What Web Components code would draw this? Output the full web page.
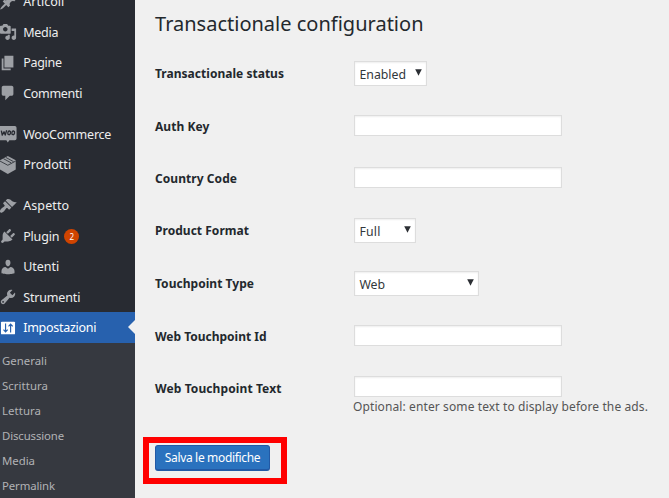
<!DOCTYPE html>
<html lang="it">
<head>
<meta charset="utf-8">
<title>Transactionale configuration</title>
<style>
body{margin:0;background:#f0f0f0;width:669px;height:498px;overflow:hidden;font-family:"Noto Sans","Open Sans",sans-serif}
</style>
</head>
<body>
<admin-page></admin-page>
<script>
const ICONS = {
  post:'<path d="M10.44 3.02l1.82-1.82 6.36 6.35-1.83 1.82c-1.05-.68-2.48-.57-3.41.36l-.75.75c-.92.93-1.04 2.35-.35 3.41l-1.83 1.82-2.41-2.41-2.8 2.79c-.42.42-3.38 2.71-3.8 2.29s1.86-3.39 2.28-3.81l2.79-2.79L4.1 9.36l1.83-1.82c1.05.69 2.48.57 3.4-.36l.75-.75c.93-.92 1.05-2.35.36-3.41z"/>',
  media:'<path fill-rule="evenodd" d="M13 11V4c0-.55-.45-1-1-1h-1.67L9 1H5L3.67 3H2c-.55 0-1 .45-1 1v7c0 .55.45 1 1 1h10c.55 0 1-.45 1-1zM7 4.5c1.38 0 2.5 1.12 2.5 2.5S8.38 9.5 7 9.5 4.5 8.38 4.5 7 5.62 4.5 7 4.5z"/><path d="M14 6h5v10.5c0 1.38-1.12 2.5-2.5 2.5S14 17.88 14 16.5s1.12-2.5 2.5-2.5c.17 0 .34.02.5.05V9h-3V6zm-4 8.05V13h2v3.5c0 1.38-1.12 2.5-2.5 2.5S7 17.88 7 16.5 8.12 14 9.5 14c.17 0 .34.02.5.05z"/>',
  page:'<path d="M6 15V2h10v13H6zm-1 1h8v2H3V5h2v11z"/>',
  comments:'<path d="M5 2h9c1.1 0 2 .9 2 2v7c0 1.1-.9 2-2 2h-2l-5 5v-5H5c-1.1 0-2-.9-2-2V4c0-1.1.9-2 2-2z"/>',
  woo:'<path d="M1 1h16.6q1.9 0 1.9 2v12q0 2-1.9 2H11.5l-1.7 2.4L8.2 17H1z"/><g fill="none" stroke="#282b32" stroke-width="1.5" stroke-linejoin="round"><path d="M2.6 6.2l1 5L5.6 7.5l1.3 3.7L8.5 5.8"/><ellipse cx="11.3" cy="8.7" rx="1.5" ry="2.1" transform="rotate(12 11.3 8.7)"/><ellipse cx="15.8" cy="8.7" rx="1.5" ry="2.1" transform="rotate(12 15.8 8.7)"/></g>',
  box:'<path d="M9.8 0L18.6 4.8V15L9.8 20 1 15V4.8z"/><path d="M1 5.6l8.8 4.7 8.8-4.7M5 3l8.6 4.7M7.6 1.6l8.6 4.7" fill="none" stroke="#282b32" stroke-width=".9"/>',
  appearance:'<path d="M14.48 11.06L7.41 3.99l1.5-1.5c.5-.56 2.3-.47 3.51.32 1.21.8 1.43 1.28 2.91 2.1 1.18.64 2.45 1.26 4.45.85zm-.71.71L6.7 4.7 4.93 6.47c-.39.39-.39 1.02 0 1.41l1.06 1.06c.39.39.39 1.03 0 1.42-.6.6-1.43 1.11-2.21 1.69-.35.26-.7.53-1.01.84C1.43 14.23.4 16.08 1.4 17.07c.99 1 2.84-.03 4.18-1.36.31-.31.58-.66.85-1.02.57-.78 1.08-1.61 1.69-2.21.39-.39 1.02-.39 1.41 0l1.06 1.06c.39.39 1.02.39 1.41 0z"/>',
  plugins:'<path d="M13.11 4.36L9.87 7.6 8 5.73l3.24-3.24c.35-.34 1.05-.2 1.56.32.52.51.66 1.21.31 1.55zm-8 1.77l.91-1.12 9.01 9.01-1.19.84c-.71.71-2.63 1.16-3.82 1.16H6.14L4.9 17.26c-.59.59-1.54.59-2.12 0-.59-.58-.59-1.53 0-2.12l1.24-1.24v-3.88c0-1.13.4-3.19 1.09-3.89zm7.26 3.97l3.24-3.24c.34-.35 1.04-.21 1.55.31.52.51.66 1.21.31 1.55l-3.24 3.25z"/>',
  users:'<path d="M10 9.25c-2.27 0-2.73-3.44-2.73-3.44C7 4.02 7.82 2 9.97 2c2.16 0 2.98 2.02 2.71 3.81 0 0-.41 3.44-2.68 3.44zm0 2.57L12.72 10c2.39 0 4.52 2.33 4.52 4.53v2.49s-3.65 1.13-7.24 1.13c-3.65 0-7.24-1.13-7.24-1.13v-2.49c0-2.25 1.94-4.48 4.47-4.48z"/>',
  tools:'<path fill-rule="evenodd" d="M16.68 9.77c-1.34 1.34-3.3 1.67-4.95.99l-5.41 6.52c-.99.99-2.59.99-3.58 0s-.99-2.59 0-3.57l6.52-5.42c-.68-1.65-.35-3.61.99-4.95 1.28-1.28 3.12-1.62 4.72-1.06l-2.89 2.89 2.82 2.82 2.86-2.87c.53 1.58.18 3.39-1.08 4.65zM3.81 16.21c.4.39 1.04.39 1.43 0 .4-.4.4-1.04 0-1.43-.39-.4-1.03-.4-1.43 0-.39.39-.39 1.03 0 1.43z"/>',
  settings:'<rect x="2.2" y="3" width="15.6" height="14" rx="1"/><path d="M7.3 5v9.2M5 11.8l2.3 2.6 2.3-2.6M12.9 15V5.8M10.6 8.2l2.3-2.6 2.3 2.6" fill="none" stroke="#2761ae" stroke-width="1.3"/>'
};
const define = (name, render, after) => customElements.define(name, class extends HTMLElement {
  connectedCallback() {
    if (this.shadowRoot) return;
    this.attachShadow({mode:'open'}).innerHTML = render(this);
    if (after) after(this);
  }
});

/* Text run tracked to fill a given width */
define('fit-text', () => `<style>:host{display:inline-block;white-space:nowrap}span{display:inline-block}</style><span></span>`, el => {
  const s = el.shadowRoot.querySelector('span');
  s.textContent = el.getAttribute('text');
  const w = +el.getAttribute('w');
  s.style.letterSpacing = (w - s.getBoundingClientRect().width) / s.textContent.length + 'px';
});

define('menu-item', el => `<style>
:host{display:flex;align-items:center;height:30.47px;flex:none;color:#eee;font-size:12.5px;position:relative}
:host([gap]){margin-top:10.5px}
svg{width:18px;height:18px;margin:0 7px 0 -1.5px;fill:#9da0a5;flex:none}
fit-text{margin-left:-.3px}
:host([active]){background:#2761ae;color:#fff}
:host([active]) svg{fill:#fff}
:host([active])::after{content:"";position:absolute;right:0;top:8px;border:7px solid transparent;border-left:0;border-right-color:#f0f0f0}
</style><svg viewBox="0 0 20 20">${ICONS[el.getAttribute('icon')]}</svg><fit-text text="${el.getAttribute('text')}" w="${el.getAttribute('w')}"></fit-text><slot></slot>`);

define('count-badge', () => `<style>:host{display:flex;align-items:center;justify-content:center;width:15px;height:15px;border-radius:50%;background:#d04400;color:#fff;font-size:8px;margin-left:5px}</style><slot></slot>`);

define('sub-item', el => `<style>:host{display:flex;align-items:center;height:25px;padding-left:2px;color:#b1b2b5;font-size:11.4px}</style><fit-text text="${el.getAttribute('text')}" w="${el.getAttribute('w')}"></fit-text>`);

define('side-menu', () => `<style>
:host{display:flex;flex-direction:column;background:#282b32;height:498px;overflow:hidden}
nav{display:flex;flex-direction:column;margin-top:-13.3px;flex:none}
section{background:#363940;padding-top:5.3px;height:170px}
</style><nav>
<menu-item icon="post" text="Articoli" w="41"></menu-item>
<menu-item icon="media" text="Media" w="35"></menu-item>
<menu-item icon="page" text="Pagine" w="38.5"></menu-item>
<menu-item icon="comments" text="Commenti" w="59"></menu-item>
<menu-item gap icon="woo" text="WooCommerce" w="88"></menu-item>
<menu-item icon="box" text="Prodotti" w="48"></menu-item>
<menu-item gap icon="appearance" text="Aspetto" w="46"></menu-item>
<menu-item icon="plugins" text="Plugin" w="36"><count-badge>2</count-badge></menu-item>
<menu-item icon="users" text="Utenti" w="36"></menu-item>
<menu-item icon="tools" text="Strumenti" w="57"></menu-item>
<menu-item active icon="settings" text="Impostazioni" w="73"></menu-item>
<section>
<sub-item text="Generali" w="45"></sub-item>
<sub-item text="Scrittura" w="46"></sub-item>
<sub-item text="Lettura" w="39"></sub-item>
<sub-item text="Discussione" w="62"></sub-item>
<sub-item text="Media" w="33"></sub-item>
<sub-item text="Permalink" w="53"></sub-item>
</section></nav>`);

define('form-row', el => `<style>
:host{display:grid;grid-template-columns:199px 1fr;align-items:center;justify-items:start;color:#23282d;font-size:12px;font-weight:700}
:host([low]) fit-text{padding-top:2px}
:host([lower]) fit-text{padding-top:4px}
</style><fit-text text="${el.getAttribute('label')}" w="${el.getAttribute('w')}"></fit-text><slot></slot>`);

const FIELD = 'box-sizing:border-box;background:#fff;border:1px solid #ddd;box-shadow:inset 0 1px 2px rgba(0,0,0,.07);';
define('text-field', () => `<style>:host{display:block;${FIELD}width:208px;height:21px}</style>`);
define('select-field', el => `<style>:host{display:flex;align-items:center;justify-content:space-between;${FIELD}height:25px;padding:1px 4px 0 4.5px;width:${el.getAttribute('width')}px;font-size:12.3px;font-weight:400;color:#32373c}
svg{width:7px;height:7px;margin-top:-3px;fill:#2c2f34}</style>
<fit-text text="${el.getAttribute('text')}" w="${el.getAttribute('w')}"></fit-text><svg viewBox="0 0 7 7"><path d="M.2.3h6.6L3.5 6.8z"/></svg>`);

define('save-button', () => `<style>
:host{display:flex;box-sizing:border-box;width:144px;height:47px;border:6px solid #f00;padding:2px 6px}
button{all:unset;box-sizing:border-box;width:115px;height:26px;background:#2a72be;border:1px solid #2259a5;border-bottom-width:2px;border-radius:3px;display:flex;align-items:center;justify-content:center;color:#fff;font-size:12px}
</style><button><fit-text text="Salva le modifiche" w="95.5"></fit-text></button>`);

define('settings-form', () => `<style>
:host{display:block;padding:0 0 0 20px}
h2{margin:0;height:47px;line-height:47px;font-size:20px;font-weight:400;color:#23282d}
.rows{display:grid;grid-template-rows:53px 51px 53px 53px 53px 51px 51px}
.note{padding-left:198px;height:25px;margin-top:-14px;font-size:12px;color:#555;display:flex;line-height:17px;position:relative}
save-button{margin:14px 0 0 -12px}
</style>
<h2><fit-text text="Transactionale configuration" w="268.5"></fit-text></h2>
<div class="rows">
<form-row label="Transactionale status" w="129"><select-field width="73" text="Enabled" w="46.5"></select-field></form-row>
<form-row low label="Auth Key" w="54.5"><text-field></text-field></form-row>
<form-row low label="Country Code" w="82"><text-field></text-field></form-row>
<form-row label="Product Format" w="94"><select-field width="62" text="Full" w="21"></select-field></form-row>
<form-row label="Touchpoint Type" w="99"><select-field width="125" text="Web" w="25.5"></select-field></form-row>
<form-row low label="Web Touchpoint Id" w="111.5"><text-field></text-field></form-row>
<form-row lower label="Web Touchpoint Text" w="126.5"><text-field></text-field></form-row>
</div>
<div class="note"><fit-text text="Optional: enter some text to display before the ads." w="295"></fit-text></div>
<save-button></save-button>`);

define('admin-page', () => `<style>:host{display:grid;grid-template-columns:135px 1fr;height:498px}</style><side-menu></side-menu><settings-form></settings-form>`);
</script>
</body>
</html>
